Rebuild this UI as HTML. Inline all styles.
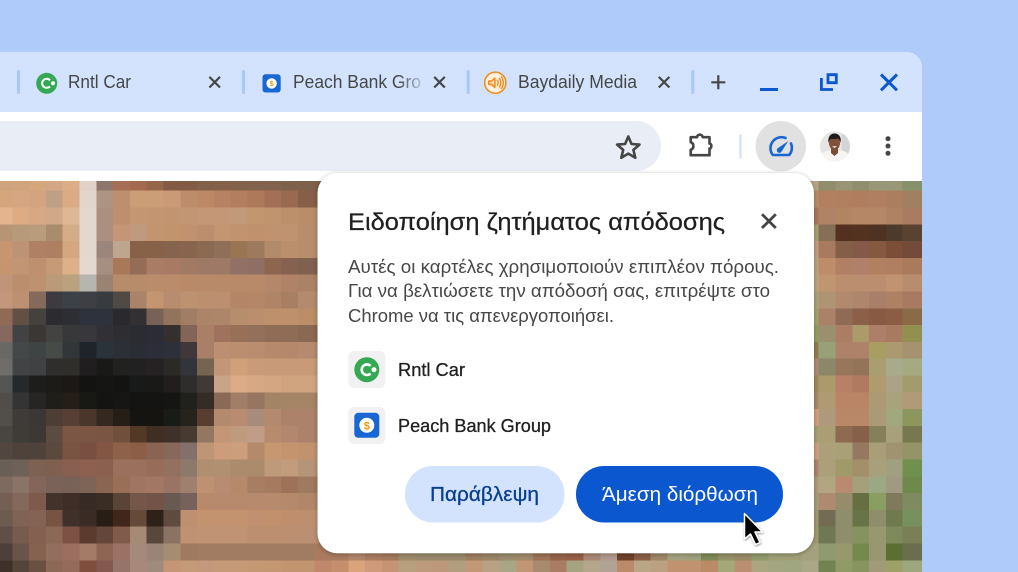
<!DOCTYPE html>
<html><head><meta charset="utf-8"><title>Chrome</title>
<style>
html,body{margin:0;padding:0;background:#aecbfa;width:1018px;height:572px;overflow:hidden}
svg{display:block;position:absolute;left:0;top:0}
text{font-family:"Liberation Sans","DejaVu Sans",sans-serif}
.m rect{width:60px;height:1.02px;shape-rendering:crispEdges}
</style></head><body>
<svg width="1018" height="572" viewBox="0 0 1018 572" xmlns="http://www.w3.org/2000/svg">
<defs>
<filter id="sh" x="-10%" y="-10%" width="120%" height="120%"><feDropShadow dx="0" dy="1" stdDeviation="2.5" flood-color="#000" flood-opacity=".32"/></filter>
<filter id="cs" x="-30%" y="-30%" width="160%" height="160%"><feDropShadow dx="0.5" dy="1" stdDeviation="1" flood-color="#000" flood-opacity=".45"/></filter>
<linearGradient id="fade" gradientUnits="userSpaceOnUse" x1="398" y1="0" x2="421" y2="0"><stop offset="0" stop-color="#444746"/><stop offset="1" stop-color="#444746" stop-opacity=".25"/></linearGradient>
<clipPath id="av"><circle cx="835" cy="146.5" r="15"/></clipPath>
</defs>
<g class="m" transform="translate(-4.5,173.9) scale(16.8)">
<g transform="translate(0,0)"><rect x=0 fill=#cfa37f /><rect x=1 fill=#d2a47e /><rect x=2 fill=#d6a67d /><rect x=3 fill=#d3a786 /><rect x=4 fill=#dbae89 /><rect x=5 fill=#e0d2c8 /><rect x=6 fill=#8f766c /><rect x=7 fill=#a66f55 /><rect x=8 fill=#a36a4d /><rect x=9 fill=#96664a /><rect x=10 fill=#835a44 /><rect x=12 fill=#836048 /><rect x=13 fill=#856149 /><rect x=14 fill=#83624b /><rect x=15 fill=#82624c /><rect x=17 fill=#7f604a /><rect x=18 fill=#7d5f4a /><rect x=48 fill=#b8a483 /><rect x=49 fill=#908d6c /><rect x=50 fill=#989474 /><rect x=51 fill=#8f8f6d /><rect x=52 fill=#989878 /><rect x=54 fill=#86906a /></g>
<g transform="translate(0,1)"><rect x=0 fill=#d5a67e /><rect x=1 fill=#d6a682 /><rect x=2 fill=#d2a47f /><rect x=3 fill=#c0a084 /><rect x=4 fill=#dbab85 /><rect x=5 fill=#e2d6cc /><rect x=6 fill=#ae9483 /><rect x=7 fill=#bd8f6e /><rect x=8 fill=#cc9e78 /><rect x=10 fill=#c99a75 /><rect x=11 fill=#bd8d6b /><rect x=12 fill=#bc8866 /><rect x=13 fill=#b68263 /><rect x=14 fill=#b27e5f /><rect x=15 fill=#ae785a /><rect x=16 fill=#a36f57 /><rect x=17 fill=#9a6a50 /><rect x=18 fill=#875e47 /><rect x=48 fill=#ba8d6c /><rect x=49 fill=#b28061 /><rect x=50 fill=#b07f60 /><rect x=51 fill=#b17d5f /><rect x=52 fill=#b07e60 /><rect x=53 fill=#ab7e60 /><rect x=54 fill=#a08061 /></g>
<g transform="translate(0,2)"><rect x=0 fill=#e3b48e /><rect x=1 fill=#ddac85 /><rect x=2 fill=#d7a884 /><rect x=3 fill=#d1a888 /><rect x=4 fill=#deb797 /><rect x=5 fill=#e3d8cf /><rect x=6 fill=#ab8f7f /><rect x=7 fill=#bf8e6f /><rect x=8 fill=#c49672 /><rect x=9 fill=#c39570 /><rect x=10 fill=#c29470 /><rect x=11 fill=#c29673 /><rect x=12 fill=#c49877 /><rect x=14 fill=#c29a7a /><rect x=15 fill=#c2966f /><rect x=16 fill=#c19470 /><rect x=17 fill=#bd906c /><rect x=18 fill=#b98d6a /><rect x=48 fill=#a87a5e /><rect x=49 fill=#b08366 /><rect x=50 fill=#b18561 /><rect x=51 fill=#b58767 /><rect x=53 fill=#b08264 /><rect x=54 fill=#a97b60 /></g>
<g transform="translate(0,3)"><rect x=0 fill=#b69474 /><rect x=1 fill=#b79a7a /><rect x=2 fill=#b89c7c /><rect x=3 fill=#a98c6e /><rect x=4 fill=#d4ac87 /><rect x=5 fill=#e3d8cf /><rect x=6 fill=#ab9082 /><rect x=7 fill=#c59577 /><rect x=8 fill=#bf9a7e /><rect x=9 fill=#c29570 /><rect x=10 fill=#c2946e /><rect x=11 fill=#c19170 /><rect x=12 fill=#bc8e6e /><rect x=13 fill=#c39571 /><rect x=14 fill=#c2936f /><rect x=15 fill=#c1916e /><rect x=16 fill=#c0926f /><rect x=17 fill=#bf9270 /><rect x=18 fill=#b88d6c /><rect x=48 fill=#a8a472 /><rect x=49 fill=#857055 /><rect x=50 fill=#53301f /><rect x=51 fill=#53331f /><rect x=52 fill=#4e3222 /><rect x=53 fill=#4e3a2a /><rect x=54 fill=#5a4230 /></g>
<g transform="translate(0,4)"><rect x=0 fill=#c79670 /><rect x=1 fill=#bd9275 /><rect x=2 fill=#af8063 /><rect x=3 fill=#ae7f61 /><rect x=4 fill=#d4a780 /><rect x=5 fill=#e3d8ce /><rect x=6 fill=#9c867c /><rect x=7 fill=#bea590 /><rect x=8 fill=#876248 /><rect x=10 fill=#86634c /><rect x=11 fill=#88644e /><rect x=12 fill=#8c6a52 /><rect x=13 fill=#8f6f57 /><rect x=14 fill=#9a7554 /><rect x=15 fill=#9e7a5c /><rect x=16 fill=#b18b6a /><rect x=17 fill=#b98f6c /><rect x=18 fill=#b88d6c /><rect x=48 fill=#c39f80 /><rect x=49 fill=#a87b60 /><rect x=50 fill=#855e48 /><rect x=51 fill=#85594a /><rect x=52 fill=#855840 /><rect x=53 fill=#7c4e38 /><rect x=54 fill=#744b39 /></g>
<g transform="translate(0,5)"><rect x=0 fill=#c6946f /><rect x=1 fill=#c29674 /><rect x=2 fill=#be9070 /><rect x=3 fill=#c69a77 /><rect x=4 fill=#ddb08a /><rect x=5 fill=#e4d9d0 /><rect x=6 fill=#a68e80 /><rect x=7 fill=#a97859 /><rect x=8 fill=#956c55 /><rect x=9 fill=#a87c65 /><rect x=10 fill=#a87a64 /><rect x=11 fill=#a27a64 /><rect x=12 fill=#9e7a66 /><rect x=13 fill=#9d7966 /><rect x=14 fill=#927065 /><rect x=15 fill=#8f6f64 /><rect x=16 fill=#8e6650 /><rect x=17 fill=#86614f /><rect x=18 fill=#80604f /><rect x=48 fill=#b9a67e /><rect x=49 fill=#bd8d6b /><rect x=50 fill=#b07f64 /><rect x=51 fill=#b1806a /><rect x=52 fill=#b18060 /><rect x=53 fill=#b07e60 /><rect x=54 fill=#aa7a5c /></g>
<g transform="translate(0,6)"><rect x=0 fill=#bf9479 /><rect x=1 fill=#bb8f6e /><rect x=2 fill=#be9271 /><rect x=3 fill=#bb9a79 /><rect x=4 fill=#bba27e /><rect x=5 fill=#b6b5b0 /><rect x=6 fill=#9b8373 /><rect x=7 fill=#b78c6b /><rect x=9 fill=#bb8c6b /><rect x=11 fill=#ba8a68 /><rect x=12 fill=#b98a69 /><rect x=16 fill=#b5876a /><rect x=17 fill=#b08368 /><rect x=18 fill=#ac8266 /><rect x=48 fill=#b9a67e /><rect x=49 fill=#c09671 /><rect x=50 fill=#bb8f6e /><rect x=51 fill=#ba8e6f /><rect x=53 fill=#c19370 /><rect x=54 fill=#b88d6e /></g>
<g transform="translate(0,7)"><rect x=0 fill=#c4977c /><rect x=1 fill=#bd9072 /><rect x=2 fill=#85695a /><rect x=3 fill=#3d3b40 /><rect x=4 fill=#3c4148 /><rect x=5 fill=#3d3f44 /><rect x=6 fill=#383b40 /><rect x=7 fill=#504a46 /><rect x=8 fill=#aa8468 /><rect x=9 fill=#c39570 /><rect x=10 fill=#b88c6e /><rect x=11 fill=#bd9270 /><rect x=12 fill=#bc906e /><rect x=13 fill=#bb8f70 /><rect x=14 fill=#b48667 /><rect x=15 fill=#b38768 /><rect x=16 fill=#b08467 /><rect x=17 fill=#a97f64 /><rect x=18 fill=#b38a6b /><rect x=48 fill=#a8a47a /><rect x=49 fill=#ae9472 /><rect x=50 fill=#b18a6e /><rect x=51 fill=#ae866c /><rect x=52 fill=#aa7f6a /><rect x=53 fill=#ae8064 /><rect x=54 fill=#a87a62 /></g>
<g transform="translate(0,8)"><rect x=0 fill=#8f6a54 /><rect x=1 fill=#635044 /><rect x=2 fill=#45423e /><rect x=3 fill=#2c2b2f /><rect x=4 fill=#2c2e33 /><rect x=5 fill=#2d323c /><rect x=7 fill=#29292e /><rect x=8 fill=#323033 /><rect x=9 fill=#776255 /><rect x=10 fill=#92735c /><rect x=11 fill=#a07d64 /><rect x=12 fill=#ac8569 /><rect x=13 fill=#ad866a /><rect x=14 fill=#b68e6d /><rect x=15 fill=#bb8f6e /><rect x=16 fill=#bf906c /><rect x=18 fill=#bb8d68 /><rect x=48 fill=#a4a46c /><rect x=49 fill=#aa8268 /><rect x=50 fill=#8f6a55 /><rect x=51 fill=#8c5f48 /><rect x=52 fill=#885a44 /><rect x=53 fill=#8a5d44 /><rect x=54 fill=#8b6a48 /></g>
<g transform="translate(0,9)"><rect x=0 fill=#86695e /><rect x=1 fill=#424245 /><rect x=2 fill=#3a3735 /><rect x=3 fill=#434341 /><rect x=4 fill=#38373a /><rect x=5 fill=#38373c /><rect x=6 fill=#313036 /><rect x=7 fill=#2d2d32 /><rect x=8 fill=#2a2c32 /><rect x=9 fill=#2b2c35 /><rect x=10 fill=#35302e /><rect x=11 fill=#836456 /><rect x=12 fill=#a97f65 /><rect x=13 fill=#9e725d /><rect x=14 fill=#987058 /><rect x=15 fill=#93705a /><rect x=16 fill=#906b55 /><rect x=17 fill=#8f6c55 /><rect x=18 fill=#8a6852 /><rect x=48 fill=#92a060 /><rect x=49 fill=#9a8f6e /><rect x=50 fill=#aa7e64 /><rect x=51 fill=#ac9a6a /><rect x=52 fill=#ad7e68 /><rect x=53 fill=#a87a60 /><rect x=54 fill=#929050 /></g>
<g transform="translate(0,10)"><rect x=0 fill=#6a6866 /><rect x=1 fill=#454849 /><rect x=2 fill=#3e4344 /><rect x=3 fill=#474b48 /><rect x=4 fill=#323638 /><rect x=5 fill=#1e242a /><rect x=6 fill=#2a323a /><rect x=7 fill=#2c3036 /><rect x=8 fill=#2a2d33 /><rect x=9 fill=#2c2d38 /><rect x=10 fill=#2e3039 /><rect x=11 fill=#3f3738 /><rect x=12 fill=#a97f67 /><rect x=13 fill=#bc8e72 /><rect x=14 fill=#bc8e70 /><rect x=15 fill=#bb8d70 /><rect x=16 fill=#b7896c /><rect x=17 fill=#b5886c /><rect x=18 fill=#b68a6e /><rect x=48 fill=#8f8050 /><rect x=49 fill=#98a078 /><rect x=50 fill=#ae8268 /><rect x=52 fill=#a89e64 /><rect x=53 fill=#ab9a70 /><rect x=54 fill=#a6926e /></g>
<g transform="translate(0,11)"><rect x=0 fill=#6f6d6b /><rect x=1 fill=#414345 /><rect x=2 fill=#3f4143 /><rect x=3 fill=#2f2e2d /><rect x=4 fill=#2f2e2b /><rect x=5 fill=#201e1e /><rect x=6 fill=#191917 /><rect x=7 fill=#212120 /><rect x=8 fill=#222121 /><rect x=9 fill=#262223 /><rect x=10 fill=#2b2a27 /><rect x=11 fill=#32343a /><rect x=12 fill=#75644f /><rect x=13 fill=#c29676 /><rect x=14 fill=#d0a07a /><rect x=15 fill=#c99b78 /><rect x=16 fill=#c89a77 /><rect x=48 fill=#b08c74 /><rect x=49 fill=#8c8768 /><rect x=50 fill=#97765c /><rect x=51 fill=#947459 /><rect x=52 fill=#a89e70 /><rect x=53 fill=#a8ab8b /><rect x=54 fill=#a4aa82 /></g>
<g transform="translate(0,12)"><rect x=0 fill=#555553 /><rect x=1 fill=#25292c /><rect x=2 fill=#1d1e1c /><rect x=3 fill=#1c1b17 /><rect x=4 fill=#1b1816 /><rect x=5 fill=#131311 /><rect x=6 fill=#151513 /><rect x=7 fill=#131412 /><rect x=8 fill=#171a18 /><rect x=9 fill=#191a18 /><rect x=10 fill=#211e1d /><rect x=11 fill=#2f2d2b /><rect x=12 fill=#413936 /><rect x=13 fill=#c9a487 /><rect x=14 fill=#dcac88 /><rect x=15 fill=#d6a885 /><rect x=16 fill=#d4a681 /><rect x=17 fill=#d0a47f /><rect x=48 fill=#9e8a60 /><rect x=49 fill=#ad9a6c /><rect x=50 fill=#b88067 /><rect x=51 fill=#b07a60 /><rect x=52 fill=#ae9c6f /><rect x=53 fill=#aba287 /><rect x=54 fill=#a29c6c /></g>
<g transform="translate(0,13)"><rect x=0 fill=#514e4a /><rect x=1 fill=#343434 /><rect x=2 fill=#272524 /><rect x=3 fill=#1f1e19 /><rect x=4 fill=#241d18 /><rect x=5 fill=#181814 /><rect x=6 fill=#141512 /><rect x=7 fill=#161614 /><rect x=8 fill=#141412 /><rect x=10 fill=#151614 /><rect x=11 fill=#20211c /><rect x=12 fill=#352d25 /><rect x=13 fill=#8a6a57 /><rect x=14 fill=#a07e67 /><rect x=15 fill=#977661 /><rect x=16 fill=#a48467 /><rect x=17 fill=#a68567 /><rect x=48 fill=#a88a68 /><rect x=49 fill=#b09a74 /><rect x=50 fill=#ba8567 /><rect x=52 fill=#ac9a75 /><rect x=53 fill=#a8a37b /><rect x=54 fill=#b19a78 /></g>
<g transform="translate(0,14)"><rect x=0 fill=#524e4a /><rect x=1 fill=#3f3b38 /><rect x=2 fill=#3b3735 /><rect x=3 fill=#4e3d35 /><rect x=4 fill=#573f35 /><rect x=5 fill=#4a362b /><rect x=6 fill=#352821 /><rect x=7 fill=#241e17 /><rect x=8 fill=#151411 /><rect x=10 fill=#191b16 /><rect x=11 fill=#25231c /><rect x=12 fill=#593d30 /><rect x=13 fill=#b48a6e /><rect x=14 fill=#b98c72 /><rect x=15 fill=#a78d79 /><rect x=16 fill=#b38a70 /><rect x=17 fill=#ad826a /><rect x=48 fill=#d4a07e /><rect x=49 fill=#ad9a7c /><rect x=50 fill=#b98869 /><rect x=52 fill=#ab9a76 /><rect x=53 fill=#a1a87e /><rect x=54 fill=#8e9660 /></g>
<g transform="translate(0,15)"><rect x=0 fill=#494541 /><rect x=1 fill=#3f3b37 /><rect x=2 fill=#3e3835 /><rect x=3 fill=#5c4b40 /><rect x=4 fill=#7b5644 /><rect x=6 fill=#7a5543 /><rect x=7 fill=#70503c /><rect x=8 fill=#523825 /><rect x=9 fill=#402e22 /><rect x=10 fill=#40302a /><rect x=11 fill=#473a30 /><rect x=12 fill=#947760 /><rect x=13 fill=#c29676 /><rect x=14 fill=#bf9a7d /><rect x=15 fill=#c19d87 /><rect x=16 fill=#b78b6d /><rect x=17 fill=#b2876d /><rect x=18 fill=#ac826a /><rect x=48 fill=#a89f75 /><rect x=49 fill=#ab9e75 /><rect x=50 fill=#8e6a50 /><rect x=51 fill=#87604a /><rect x=52 fill=#85805a /><rect x=53 fill=#a8a07a /><rect x=54 fill=#787850 /></g>
<g transform="translate(0,16)"><rect x=0 fill=#514640 /><rect x=1 fill=#4e423b /><rect x=3 fill=#5c493e /><rect x=4 fill=#7a5443 /><rect x=5 fill=#784f40 /><rect x=6 fill=#825643 /><rect x=7 fill=#8e614a /><rect x=8 fill=#8d5e47 /><rect x=9 fill=#8a6352 /><rect x=10 fill=#87685a /><rect x=11 fill=#84706a /><rect x=12 fill=#be9675 /><rect x=13 fill=#cc9c7b /><rect x=14 fill=#cc9e7c /><rect x=15 fill=#b48a6b /><rect x=16 fill=#c69770 /><rect x=17 fill=#c3946e /><rect x=18 fill=#c2926f /><rect x=48 fill=#d0a080 /><rect x=49 fill=#aba07a /><rect x=50 fill=#aaa078 /><rect x=51 fill=#947860 /><rect x=52 fill=#a89e78 /><rect x=53 fill=#a09470 /><rect x=54 fill=#959468 /></g>
<g transform="translate(0,17)"><rect x=0 fill=#6a5f57 /><rect x=1 fill=#6f6058 /><rect x=2 fill=#7d6254 /><rect x=3 fill=#7f5f50 /><rect x=4 fill=#885f50 /><rect x=5 fill=#8d6050 /><rect x=6 fill=#8b604e /><rect x=7 fill=#9b705c /><rect x=9 fill=#976c58 /><rect x=10 fill=#94705f /><rect x=11 fill=#8d7969 /><rect x=12 fill=#af8f70 /><rect x=13 fill=#b09070 /><rect x=14 fill=#ac8b6c /><rect x=16 fill=#bf9a7a /><rect x=17 fill=#c29c7c /><rect x=18 fill=#b69478 /><rect x=48 fill=#b08570 /><rect x=49 fill=#aca07a /><rect x=50 fill=#a09a6a /><rect x=51 fill=#a3906a /><rect x=52 fill=#a8a07a /><rect x=53 fill=#a0a080 /><rect x=54 fill=#70904f /></g>
<g transform="translate(0,18)"><rect x=0 fill=#7f6a60 /><rect x=1 fill=#8a7367 /><rect x=2 fill=#84655a /><rect x=3 fill=#7a6259 /><rect x=4 fill=#786156 /><rect x=5 fill=#7d6456 /><rect x=6 fill=#8a6652 /><rect x=7 fill=#996f58 /><rect x=8 fill=#a07562 /><rect x=9 fill=#a27864 /><rect x=10 fill=#9b7364 /><rect x=11 fill=#9f7f6e /><rect x=12 fill=#bd9172 /><rect x=13 fill=#b78c70 /><rect x=14 fill=#b6896b /><rect x=15 fill=#a87e62 /><rect x=16 fill=#a67a5f /><rect x=17 fill=#9e7258 /><rect x=18 fill=#a07a5e /><rect x=48 fill=#b09c80 /><rect x=49 fill=#b2a582 /><rect x=50 fill=#b88a70 /><rect x=51 fill=#a4a07a /><rect x=52 fill=#9ca884 /><rect x=53 fill=#a09a80 /><rect x=54 fill=#6d8a4c /></g>
<g transform="translate(0,19)"><rect x=0 fill=#755f55 /><rect x=1 fill=#85685c /><rect x=2 fill=#7e5a4c /><rect x=3 fill=#42322a /><rect x=4 fill=#3f2e27 /><rect x=5 fill=#372a24 /><rect x=6 fill=#392d24 /><rect x=7 fill=#5a4438 /><rect x=8 fill=#755749 /><rect x=9 fill=#735347 /><rect x=10 fill=#685a50 /><rect x=11 fill=#77625b /><rect x=12 fill=#b9896c /><rect x=13 fill=#b88a6d /><rect x=17 fill=#b58a6c /><rect x=18 fill=#b28669 /><rect x=48 fill=#a4a07a /><rect x=49 fill=#ae8a70 /><rect x=50 fill=#958c6c /><rect x=51 fill=#666f42 /><rect x=52 fill=#8a9e62 /><rect x=53 fill=#807a5c /><rect x=54 fill=#7e8a60 /></g>
<g transform="translate(0,20)"><rect x=0 fill=#6d5b50 /><rect x=1 fill=#7f6354 /><rect x=2 fill=#846354 /><rect x=3 fill=#775343 /><rect x=4 fill=#40302a /><rect x=5 fill=#3a2c25 /><rect x=6 fill=#291e15 /><rect x=7 fill=#40261b /><rect x=8 fill=#654a3a /><rect x=9 fill=#2e2118 /><rect x=10 fill=#5f4a3e /><rect x=11 fill=#bf9070 /><rect x=12 fill=#c39370 /><rect x=15 fill=#c09070 /><rect x=16 fill=#c2906c /><rect x=17 fill=#bf8f6d /><rect x=18 fill=#bd8f6f /><rect x=48 fill=#a09a70 /><rect x=49 fill=#736b52 /><rect x=50 fill=#8e8e6c /><rect x=51 fill=#687448 /><rect x=52 fill=#8e8e6a /><rect x=53 fill=#6f7a4e /><rect x=54 fill=#78905e /></g>
<g transform="translate(0,21)"><rect x=0 fill=#604e47 /><rect x=1 fill=#775b4e /><rect x=2 fill=#83604f /><rect x=3 fill=#8a6a56 /><rect x=4 fill=#7d5244 /><rect x=5 fill=#5a3b2e /><rect x=6 fill=#65463a /><rect x=7 fill=#805a4a /><rect x=8 fill=#a68a75 /><rect x=9 fill=#5a473c /><rect x=10 fill=#8a7364 /><rect x=11 fill=#c19272 /><rect x=12 fill=#c09374 /><rect x=13 fill=#bf9373 /><rect x=15 fill=#bb8f70 /><rect x=18 fill=#ba8f72 /><rect x=48 fill=#a09a70 /><rect x=49 fill=#6f7853 /><rect x=50 fill=#8f8e6c /><rect x=51 fill=#86925f /><rect x=52 fill=#989870 /><rect x=53 fill=#7e8a5c /><rect x=54 fill=#7a8056 /></g>
<g transform="translate(0,22)"><rect x=0 fill=#4f3f3a /><rect x=1 fill=#6a5349 /><rect x=2 fill=#85614f /><rect x=3 fill=#936d5d /><rect x=4 fill=#9b6e60 /><rect x=5 fill=#a37b66 /><rect x=6 fill=#8e6552 /><rect x=7 fill=#9a7164 /><rect x=8 fill=#a5897b /><rect x=9 fill=#9a8478 /><rect x=10 fill=#a68c70 /><rect x=11 fill=#a07a60 /><rect x=12 fill=#a27c62 /><rect x=19 fill=#a97b60 /><rect x=21 fill=#b0856a /><rect x=22 fill=#a87c60 /><rect x=23 fill=#a27a5e /><rect x=24 fill=#a08a6b /><rect x=25 fill=#9a8a6b /><rect x=28 fill=#9c7f5f /><rect x=29 fill=#9a8565 /><rect x=30 fill=#9a8c6c /><rect x=31 fill=#a08a6b /><rect x=32 fill=#9f7356 /><rect x=33 fill=#95644a /><rect x=34 fill=#975f46 /><rect x=35 fill=#ab8a74 /><rect x=36 fill=#b09a8e /><rect x=37 fill=#6f412a /><rect x=38 fill=#8a5f45 /><rect x=39 fill=#9e8668 /><rect x=40 fill=#a4a27e /><rect x=41 fill=#a0a27c /><rect x=42 fill=#7f8a58 /><rect x=43 fill=#94906a /><rect x=44 fill=#9a8a66 /><rect x=45 fill=#8f9a6c /><rect x=46 fill=#a0a078 /><rect x=48 fill=#a4a27e /><rect x=49 fill=#909a70 /><rect x=50 fill=#98986e /><rect x=51 fill=#75894f /><rect x=52 fill=#979770 /><rect x=53 fill=#5d6e34 /><rect x=54 fill=#696f4c /></g>
<g transform="translate(0,23)"><rect x=0 fill=#3f3029 /><rect x=1 fill=#544439 /><rect x=2 fill=#6a5040 /><rect x=3 fill=#8c6856 /><rect x=4 fill=#946a5a /><rect x=5 fill=#7f4e3c /><rect x=6 fill=#84584e /><rect x=7 fill=#967469 /><rect x=8 fill=#a8887a /><rect x=9 fill=#a08a7c /><rect x=10 fill=#c49674 /><rect x=11 fill=#c59a78 /><rect x=12 fill=#c4987a /><rect x=13 fill=#c49a78 /><rect x=14 fill=#c69a76 /><rect x=15 fill=#c59874 /><rect x=16 fill=#c49672 /><rect x=17 fill=#c29470 /><rect x=19 fill=#c0886a /><rect x=20 fill=#c58f6e /><rect x=21 fill=#dba37c /><rect x=22 fill=#cf9a7a /><rect x=23 fill=#c59474 /><rect x=24 fill=#b8a07f /><rect x=25 fill=#bd9a7c /><rect x=26 fill=#bd9779 /><rect x=27 fill=#b09e7e /><rect x=28 fill=#c29775 /><rect x=29 fill=#b7a283 /><rect x=30 fill=#a8a685 /><rect x=31 fill=#c09675 /><rect x=32 fill=#a88a6e /><rect x=33 fill=#a97d63 /><rect x=34 fill=#a6a380 /><rect x=35 fill=#b3a68b /><rect x=36 fill=#b0a294 /><rect x=37 fill=#bb8a6b /><rect x=38 fill=#baa584 /><rect x=39 fill=#bba180 /><rect x=40 fill=#c0926f /><rect x=42 fill=#b98b66 /><rect x=43 fill=#a3a878 /><rect x=44 fill=#ba8f71 /><rect x=45 fill=#aaa67f /><rect x=46 fill=#a4a581 /><rect x=47 fill=#a0a67f /><rect x=48 fill=#a9a785 /><rect x=49 fill=#6f8450 /><rect x=50 fill=#8f9a66 /><rect x=51 fill=#87945f /><rect x=52 fill=#a09a78 /><rect x=53 fill=#9f9f68 /><rect x=54 fill=#9ca77e /></g>
</g>
<!-- page bg over mosaic -->
<rect x="922" y="0" width="96" height="572" fill="#aecbfa"/>
<!-- window chrome -->
<path d="M0 52H907a15 15 0 0 1 15 15V112H0z" fill="#d3e3fd"/>
<rect x="0" y="112" width="922" height="69" fill="#fff"/>
<path d="M0 121H636a25 25 0 0 1 0 50H0z" fill="#e9eef6"/>
<g fill="#a8c7fa"><rect x="17" y="70" width="3" height="24" rx="1.5"/><rect x="242" y="70" width="3" height="24" rx="1.5"/><rect x="466.7" y="70" width="3" height="24" rx="1.5"/><rect x="691.3" y="70" width="3" height="24" rx="1.5"/></g>
<!-- tab favicons -->
<circle cx="46.7" cy="83.300" r="10.500" fill="#34a853"/>
<path d="M50 80.300A4.500 4.500 0 1 0 50 86.300" fill="none" stroke="#fff" stroke-width="2"/>
<circle cx="53" cy="83.300" r="2" fill="#fff"/>
<rect x="262.500" y="74.300" width="18.200" height="18.200" rx="3" fill="#1967d2"/>
<circle cx="271.600" cy="83.400" r="5.200" fill="#fff"/>
<text x="271.600" y="86" font-size="7.500" font-weight="700" fill="#f29900" text-anchor="middle">$</text>
<circle cx="495.300" cy="82.700" r="10.600" fill="#fff1dc" stroke="#f08a1d" stroke-width="1.500"/>
<path d="M488.800 81h2.700l3.400-3v9.400l-3.400-3h-2.700z" fill="#fbd9a8" stroke="#f08a1d" stroke-width="1.500" stroke-linejoin="round"/>
<path d="M497 79.800a4.200 4.200 0 0 1 0 5.800M499 78a7 7 0 0 1 0 9.400M501 76.500a9.500 9.500 0 0 1 0 12.400" fill="none" stroke="#f08a1d" stroke-width="1.400"/>
<!-- tab text -->
<text x="68" y="88" font-size="18" fill="#444746" textLength="63" lengthAdjust="spacingAndGlyphs">Rntl Car</text>
<text x="293" y="88" font-size="18" fill="url(#fade)" textLength="128" lengthAdjust="spacingAndGlyphs">Peach Bank Gro</text>
<text x="518" y="88" font-size="18" fill="#444746" textLength="119" lengthAdjust="spacingAndGlyphs">Baydaily Media</text>
<!-- tab x -->
<g stroke="#444746" stroke-width="2.200" fill="none">
<path d="M209.400 76.900l10.600 10.600M220 76.900l-10.600 10.600"/>
<path d="M434.200 76.900l10.600 10.600M444.800 76.900l-10.600 10.600"/>
<path d="M658.800 76.900l10.600 10.600M669.400 76.900l-10.600 10.600"/>
<path d="M711.300 82.300h14M718.300 75.300v14"/>
</g>
<!-- window controls -->
<rect x="760" y="88" width="18" height="3" fill="#0b57d0"/>
<path d="M828 74.700h8.300v8H828z" fill="none" stroke="#0b57d0" stroke-width="2.800"/>
<path d="M821.400 78v11.500h11.600" fill="none" stroke="#0b57d0" stroke-width="2.800"/>
<path d="M881 74.500l16 15.800M897 74.500l-16 15.800" fill="none" stroke="#0b57d0" stroke-width="3"/>
<!-- star -->
<path d="M628.300 136.500l3.200 7.500 8 .6-6.100 5.300 1.900 7.900-7-4.200-7 4.200 1.900-7.900-6.100-5.300 8-.6z" fill="none" stroke="#444746" stroke-width="2.600" stroke-linejoin="round"/>
<!-- puzzle -->
<path d="M690.700 137.200h6.300c.3-3.400 5.300-3.400 5.700 0h6.800v6.300c2.500 0 2.500 5 0 5v6.700h-18.800v-5.500c3.600-1 3.600-6.500 0-7.500z" fill="none" stroke="#444746" stroke-width="2.600" stroke-linejoin="round"/>
<!-- sep + perf button -->
<rect x="739.200" y="134.500" width="2.400" height="24" fill="#d3e3fd"/>
<circle cx="780.800" cy="146.200" r="25.200" fill="#e1e1e1"/>
<path d="M785.500 138A11 11 0 0 0 772.800 155H789.200A11 11 0 0 0 791 143.500" fill="none" stroke="#1967d2" stroke-width="2.600" stroke-linecap="round"/>
<path d="M788.300 141L781.300 152a2.600 2.600 0 0 1-3.800-3.600z" fill="#1967d2"/>
<!-- avatar -->
<g clip-path="url(#av)">
<rect x="820" y="131" width="30" height="31" fill="#e4e5e3"/>
<rect x="842" y="131" width="8" height="31" fill="#d2d5d3"/>
<path d="M820 162v-6c3-5 8-5 10-6l5 3 5-3c2 1 7 1 10 6v6z" fill="#f6f5f3"/>
<path d="M831 148h7v5l-3.500 3-3.500-3z" fill="#7a4c36"/>
<ellipse cx="834.500" cy="143" rx="5.500" ry="7" fill="#80513a"/>
<path d="M828.500 143c-1-6 2-9.500 6-9.500s7.500 3.500 6 9.500c-.6-3-1.500-4-3-4.500-2.500 .7-4.500 .7-6 .2-1.600 .8-2.500 2-3 4.300z" fill="#1d1a18"/>
<path d="M832 146.300h5l-2.500 1.700z" fill="#f3efe9"/>
</g>
<!-- dots -->
<g fill="#444746"><circle cx="888" cy="138.700" r="2.500"/><circle cx="888" cy="146" r="2.500"/><circle cx="888" cy="153.300" r="2.500"/></g>
<!-- dialog -->
<rect x="317.500" y="173" width="496.500" height="380.300" rx="20" fill="#fff" filter="url(#sh)"/>
<text x="348" y="230" font-size="24.500" fill="#1f1f1f" stroke="#1f1f1f" stroke-width=".25" textLength="377" lengthAdjust="spacingAndGlyphs">Ειδοποίηση ζητήματος απόδοσης</text>
<path d="M762 214.200l13.800 13.800M775.800 214.200L762 228" fill="none" stroke="#444746" stroke-width="2.800"/>
<g font-size="18.500" fill="#474747">
<text x="348" y="273" textLength="431" lengthAdjust="spacingAndGlyphs">Αυτές οι καρτέλες χρησιμοποιούν επιπλέον πόρους.</text>
<text x="348" y="297" textLength="422" lengthAdjust="spacingAndGlyphs">Για να βελτιώσετε την απόδοσή σας, επιτρέψτε στο</text>
<text x="348" y="322" textLength="266" lengthAdjust="spacingAndGlyphs">Chrome να τις απενεργοποιήσει.</text>
</g>
<rect x="348.300" y="351" width="37" height="37" rx="6" fill="#f1f1f1"/>
<circle cx="366.800" cy="369.700" r="12.500" fill="#34a853"/>
<path d="M370.600 365.800A5.300 5.300 0 1 0 370.600 373.600" fill="none" stroke="#fff" stroke-width="2.600"/>
<circle cx="374" cy="369.700" r="2.500" fill="#fff"/>
<rect x="348.300" y="407" width="37" height="37" rx="6" fill="#f1f1f1"/>
<rect x="354.300" y="412.800" width="25" height="25" rx="4" fill="#1967d2"/>
<circle cx="366.800" cy="425.300" r="7.500" fill="#fff"/>
<text x="366.800" y="429.300" font-size="11" font-weight="700" fill="#f29900" text-anchor="middle">$</text>
<g font-size="18.500" fill="#1f1f1f" stroke="#1f1f1f" stroke-width=".3">
<text x="398" y="376" textLength="67" lengthAdjust="spacingAndGlyphs">Rntl Car</text>
<text x="398" y="432" textLength="153" lengthAdjust="spacingAndGlyphs">Peach Bank Group</text>
</g>
<rect x="405" y="466" width="159.500" height="56.500" rx="28" fill="#d3e3fd"/>
<rect x="576" y="466" width="207" height="56.500" rx="28" fill="#0b57d0"/>
<text x="430" y="501" font-size="20.500" fill="#0a3f8f" stroke="#0a3f8f" stroke-width=".3" textLength="109" lengthAdjust="spacingAndGlyphs">Παράβλεψη</text>
<text x="602" y="501" font-size="20.500" fill="#fff" textLength="156" lengthAdjust="spacingAndGlyphs">Άμεση διόρθωση</text>
<!-- cursor -->
<path d="M744.500 513.500V539l6-5 5 10.500 4.500-2-5-10.500h7.500z" fill="#000" stroke="#fff" stroke-width="1.500" stroke-linejoin="round" filter="url(#cs)"/>
</svg>
</body></html>
